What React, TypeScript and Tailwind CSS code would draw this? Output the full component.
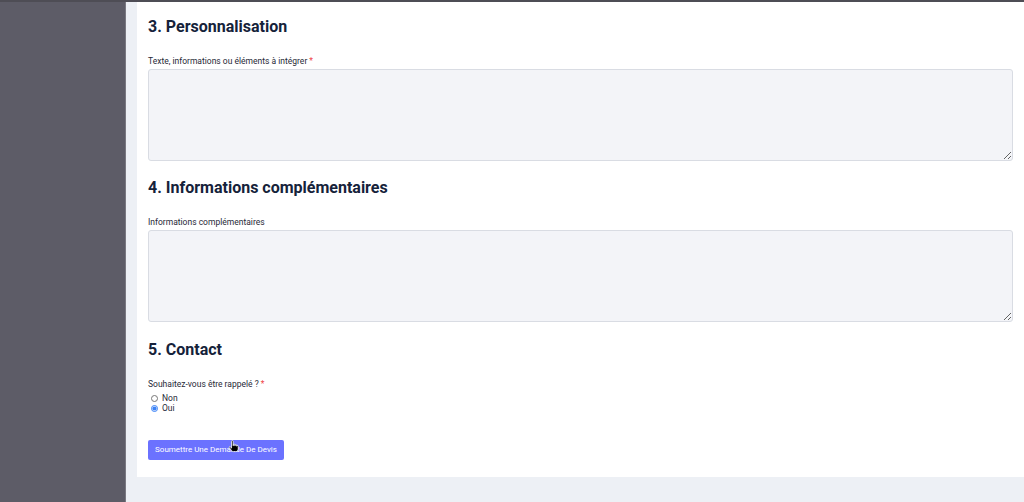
import { useState } from "react";

function Field({ label, required }: { label: string; required?: boolean }) {
  return (
    <div className="flex flex-col">
      <label className="text-[8.5px] leading-[10px] text-[#1f2937]">
        {label}
        {required && <span className="ml-[2px] text-[#ef4444]">*</span>}
      </label>
      <textarea className="mt-[3px] h-[92px] w-full resize-y rounded-[3px] border border-[#d9dce3] bg-[#f3f4f8] outline-none" />
    </div>
  );
}

// pointer hand hovering the submit button
function HandCursor() {
  return (
    <svg width="11" height="13" viewBox="0 0 14 16" className="absolute left-[80px] top-[5px]">
      <path
        d="M4.5 1.5a1 1 0 0 1 2 0V7h.3V6a1 1 0 0 1 2 0v1.2h.2v-.6a1 1 0 0 1 2 0v1a1 1 0 0 1 2 0V11c0 2-1.3 3.5-3.3 3.5H7c-1.2 0-2-.6-2.6-1.5L1.6 9.2c-.5-.7.4-1.5 1.1-.9L4.5 10z"
        fill="#000"
        stroke="#fff"
        strokeWidth="1"
        strokeLinejoin="round"
      />
    </svg>
  );
}

export default function App() {
  const [callback, setCallback] = useState("oui");

  return (
    <div className="flex h-[502px] w-[1024px] overflow-hidden border-t-2 border-[#4e4d55] bg-[#edf0f5] font-['Roboto','Liberation_Sans',sans-serif]">
      {/* Sidebar */}
      <aside className="h-full w-[126px] shrink-0 border-r border-[#7a7982] bg-[#5d5c67]" />

      {/* Main */}
      <main className="flex-1 pl-[11px]">
        <div className="h-[475px] bg-white px-[11px] pt-[14px]">
          <h2 className="text-[16px] leading-[22px] font-bold text-[#15223a]">3. Personnalisation</h2>
          <div className="mt-[18px]">
            <Field label="Texte, informations ou éléments à intégrer" required />
          </div>

          <h2 className="mt-[16px] text-[16px] leading-[22px] font-bold text-[#15223a]">
            4. Informations complémentaires
          </h2>
          <div className="mt-[18px]">
            <Field label="Informations complémentaires" />
          </div>

          <h2 className="mt-[17px] text-[16px] leading-[22px] font-bold text-[#15223a]">5. Contact</h2>
          <div className="mt-[18px] flex flex-col">
            <span className="text-[8.5px] leading-[10px] text-[#1f2937]">
              Souhaitez-vous être rappelé ?<span className="ml-[2px] text-[#ef4444]">*</span>
            </span>
            <div className="mt-[4px] flex flex-col">
              {[
                { v: "non", l: "Non" },
                { v: "oui", l: "Oui" },
              ].map((o) => (
                <label key={o.v} className="flex h-[10px] items-center gap-[4px] pl-[3px] text-[8.5px] text-[#1f2937]">
                  <input
                    type="radio"
                    name="callback"
                    checked={callback === o.v}
                    onChange={() => setCallback(o.v)}
                    className="m-0 h-[7px] w-[7px] accent-[#3b82f6]"
                  />
                  {o.l}
                </label>
              ))}
            </div>
          </div>

          <div className="relative mt-[22px] w-fit">
            <button className="h-[20px] w-[136px] rounded-[2px] bg-[#6b72ff] text-[8px] font-normal text-white">
              Soumettre Une Demande De Devis
            </button>
            <HandCursor />
          </div>
        </div>
      </main>
    </div>
  );
}
